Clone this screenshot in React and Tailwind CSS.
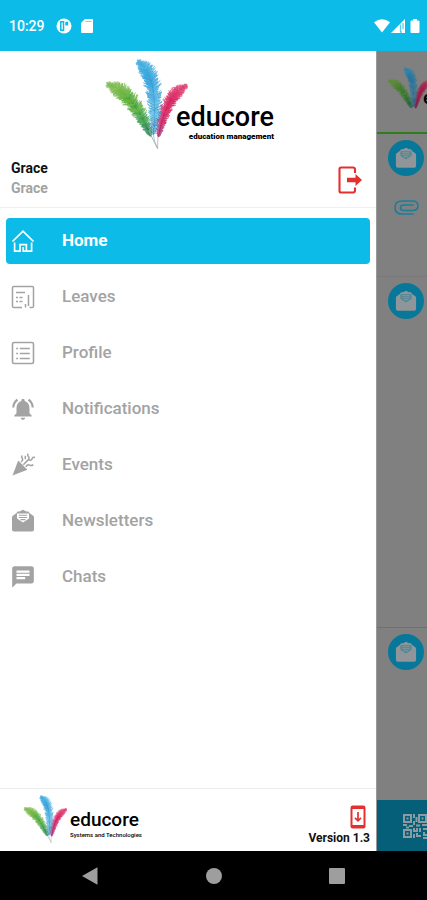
import { MdChat, MdNotificationsActive } from 'react-icons/md'
import clsx from 'clsx'

const FEATHERS = [
    {
        spine: [[46, 102], [124, 124], [178, 260]],
        width: 48,
        colors: ['#8fc062', '#74b742', '#58ac30', '#2f983a', '#136b52'],
    },
    {
        spine: [[286, 106], [222, 132], [200, 262]],
        width: 37,
        colors: ['#e0608a', '#dd3a6c', '#da2260', '#cb1758', '#8f2270'],
    },
    {
        spine: [[138, 34], [204, 66], [185, 256]],
        width: 48,
        colors: ['#5ab8e4', '#38a9df', '#2396d6', '#2aa3d8', '#136aa8'],
    },
]

// point and unit direction on a quadratic curve
function pointAt([a, b, c], t) {
    const u = 1 - t
    const x = u * u * a[0] + 2 * u * t * b[0] + t * t * c[0]
    const y = u * u * a[1] + 2 * u * t * b[1] + t * t * c[1]
    const dx = 2 * u * (b[0] - a[0]) + 2 * t * (c[0] - b[0])
    const dy = 2 * u * (b[1] - a[1]) + 2 * t * (c[1] - b[1])
    const len = Math.hypot(dx, dy)
    return { x, y, dx: dx / len, dy: dy / len }
}

// repeatable noise in 0..1
function noise(n) {
    const v = Math.sin(n * 127.1) * 43758.5453
    return v - Math.floor(v)
}

function barbs({ spine, width, colors }) {
    const out = []
    const count = 130
    for (let i = 0; i < count; i++) {
        const t = i / count
        const p = pointAt(spine, t)
        const profile = Math.min(1, 0.18 + t * 1.9) * Math.pow(1 - t, 0.32)
        for (const side of [-1, 1]) {
            const r = noise(i * 2 + side)
            const len = width * profile * (0.4 + 0.6 * r)
            const nx = -p.dy * side
            const ny = p.dx * side
            const mx = p.x + nx * len * 0.35 - p.dx * len * 0.35
            const my = p.y + ny * len * 0.35 - p.dy * len * 0.35
            const ex = p.x + nx * len * 0.75 - p.dx * len * 0.55
            const ey = p.y + ny * len * 0.75 - p.dy * len * 0.55
            const shade = Math.min(4, Math.floor(t * 3.4 + (1 - r) * 1.6))
            out.push({
                d: `M${p.x.toFixed(1)} ${p.y.toFixed(1)}Q${mx.toFixed(1)} ${my.toFixed(1)} ${ex.toFixed(1)} ${ey.toFixed(1)}`,
                color: colors[shade],
            })
        }
    }
    return out
}

function Feathers({ className }) {
    return (
        <svg viewBox="36 22 254 278" className={className} aria-hidden="true">
            {FEATHERS.map((f, i) => (
                <g key={i} fill="none" strokeLinecap="round">
                    {barbs(f).map((b, j) => (
                        <path key={j} d={b.d} stroke={b.color} strokeWidth={2.8} opacity={0.75} />
                    ))}
                </g>
            ))}
            <g fill="none" strokeWidth={2.5} strokeLinecap="round">
                <path d="M172 242Q184 270 197 294" stroke="#7fb59a" />
                <path d="M185 254Q188 275 198 296" stroke="#a9b3bb" />
                <path d="M199 262L198 296" stroke="#d9a0b4" />
            </g>
        </svg>
    )
}

function HomeIcon() {
    return (
        <svg viewBox="0 0 24 24" className="size-6" fill="none" stroke="currentColor" strokeWidth={1.7}>
            <path d="M1.5 12.5L12 2.2L22.5 12.5" />
            <path d="M3.6 13.5V22.2H9V15.6H15.4V22.2H20.6V13.5" />
            <path d="M12.2 18V22.2H15.4" />
        </svg>
    )
}

function LeavesIcon() {
    return (
        <svg viewBox="0 0 24 24" className="size-6" fill="none" stroke="currentColor" strokeWidth={1.5}>
            <path d="M11 22.5H2.8Q1.5 22.5 1.5 21.2V2.8Q1.5 1.5 2.8 1.5H21.2Q22.5 1.5 22.5 2.8V21.2Q22.5 22.5 21.2 22.5H18.5" />
            <path d="M5 7.5H14M5 12.5H7M8.5 12.5H11.5M5 16.5H7M8.5 16.5H11.5" />
            <path d="M14.5 19V22.5M17.5 10V21" />
        </svg>
    )
}

function ProfileIcon() {
    return (
        <svg viewBox="0 0 24 24" className="size-6" fill="none" stroke="currentColor" strokeWidth={1.6}>
            <rect x="1.5" y="1.5" width="21" height="21" rx="1.5" />
            <path d="M5.2 7.5H7M5.2 12.5H7M5.2 17.5H7M8.8 7.5H18.8M8.8 12.5H18.8M8.8 17.5H18.8" />
        </svg>
    )
}

function BellIcon() {
    return <MdNotificationsActive className="size-[26px]" />
}

function EventsIcon() {
    return (
        <svg viewBox="0 0 24 24" className="size-6" fill="none" stroke="currentColor" strokeWidth={1.5}>
            <path d="M1.5 22.5L7.2 7.6L16.4 16.8Z" fill="currentColor" stroke="none" />
            <path d="M10 8.8Q12.600 7.200 11.200 5.200Q10 3.800 11.200 2.400" />
            <path d="M12.3 11.7L17.600 6.400Q18.800 4.800 17.400 3.400Q16 2 17.300 .8" />
            <path d="M17.600 6.600Q20.500 8 21 5.800Q21.500 3.800 24 4.600" />
            <path d="M14.800 13.800Q16.800 11 18.800 12.200Q20.500 13.200 22.200 11.600" />
            <path d="M14.300 2.800V6.200" />
        </svg>
    )
}

function MailIcon({ className = 'size-6', paper = '#ffffff' }) {
    return (
        <svg viewBox="0 0 24 24" className={className} aria-hidden="true">
            <path
                d="M12 .8L8.500 2.500H6.500L5.500 4L1.500 7Q1 7.500 1 8.500V20.500Q1 22.500 3 22.500H21Q23 22.500 23 20.500V8.500Q23 7.500 22.500 7L18.500 4L17.500 2.500H15.500Z"
                fill="currentColor" />
            <path d="M6 4.500H18V9.500L12 13.500L6 9.500Z" fill={paper} />
            <path d="M7.800 6.200H16.200M7.800 8.500H16.200M9.500 10.600H14.500" stroke="currentColor" strokeWidth={1.1} />
        </svg>
    )
}

function ChatIcon() {
    return <MdChat className="size-[26px]" />
}

function ClipIcon() {
    return (
        <svg viewBox="0 0 25 15" className="mt-[24px] ml-[6px] h-[15px] w-[25px] shrink-0" fill="none" stroke="#1b7c9a" strokeWidth={1.6} aria-hidden="true">
            <path d="M19 14H8Q1 14 1 7.500T8 1H18.500Q24 1 24 5.700T18.500 10.500H9.500Q6.500 10.500 6.500 7.700T9.500 5H19" strokeLinecap="round" />
        </svg>
    )
}

function LogoutIcon() {
    return (
        <svg viewBox="0 0 24 28" className="h-7 w-6" fill="none" stroke="#e53030" strokeWidth={2.1}>
            <path d="M17 7V3.500Q17 1.500 15 1.500H3Q1.500 1.500 1.500 3V25Q1.500 26.500 3 26.500H15Q17 26.500 17 24.500V21.500" />
            <path d="M9 11.700H17.500V8L24 14L17.500 20V16.300H9Z" fill="#e53030" stroke="none" />
        </svg>
    )
}

function UpdateIcon() {
    return (
        <svg viewBox="0 0 16 24" className="h-6 w-4" aria-hidden="true">
            <rect x="0.500" y="0.500" width="15" height="23" rx="2.200" fill="#e53030" />
            <rect x="2.500" y="4" width="11" height="16" fill="#ffffff" />
            <path d="M8 7V15.500M5 12.800L8 15.800L11 12.800" fill="none" stroke="#e53030" strokeWidth={1.7} />
        </svg>
    )
}

function QrIcon() {
    return (
        <svg viewBox="0 0 26 26" className="size-[26px] shrink-0" fill="none" stroke="currentColor" strokeWidth={2}>
            <path d="M2 2H9V9H2ZM17 2H24V9H17ZM2 17H9V24H2Z" />
            <path d="M4.500 5.500H6.500M19.500 5.500H21.500M4.500 20.500H6.500" />
            <path d="M12 1V5M14.500 4V9M12 8V12M1 12H5M7 13H11M4 14.500H7M14 12.500H18M20 12H25M12 15V18H15V15M18 15V19M21 16H25M12 21V25M15 20V23H19M22 19V22H25M21 25H25" />
        </svg>
    )
}

const MENU = [
    { label: 'Home', Icon: HomeIcon, active: true },
    { label: 'Leaves', Icon: LeavesIcon },
    { label: 'Profile', Icon: ProfileIcon },
    { label: 'Notifications', Icon: BellIcon },
    { label: 'Events', Icon: EventsIcon },
    { label: 'Newsletters', Icon: MailIcon },
    { label: 'Chats', Icon: ChatIcon },
]

function StatusBar() {
    return (
        <header className="flex h-[51px] shrink-0 items-center justify-between bg-[#0dbbe8] pt-px pr-[7px] pl-[9px] text-white">
            <div className="flex items-center">
                <span className="pt-px text-[14px] font-medium">10:29</span>
                <svg viewBox="0 0 16 16" className="ml-[11px] size-4" aria-hidden="true">
                    <circle cx="8" cy="8" r="7.500" fill="#ffffff" />
                    <path d="M4.200 3.800H7.500V12.200H4.800V3.800" fill="none" stroke="#0dbbe8" strokeWidth={1.500} />
                    <path d="M9.300 3.800H12.200V7.500H9.300Z" fill="#0dbbe8" />
                </svg>
                <svg viewBox="0 0 12 14" className="ml-[9px] h-[14px] w-3" aria-hidden="true">
                    <path d="M4 0H11Q12 0 12 1V13Q12 14 11 14H1Q0 14 0 13V4Z" fill="#ffffff" />
                    <path d="M4.500 2.500H10.500" stroke="#0dbbe8" strokeWidth={1} opacity={0.6} />
                </svg>
            </div>
            <div className="flex items-center">
                <svg viewBox="0 0 16 14" className="h-[14px] w-4" aria-hidden="true">
                    <path d="M0 3.200Q8 -2.800 16 3.200L8 13.500Z" fill="#ffffff" />
                </svg>
                <svg viewBox="0 0 14 14" className="ml-px size-[14px]" aria-hidden="true">
                    <path d="M0 14L14 0V14Z" fill="#ffffff" />
                    <path d="M9.500 5.500V13H11M12 4V10" fill="none" stroke="#0dbbe8" strokeWidth={1.300} opacity={0.700} />
                </svg>
                <svg viewBox="0 0 10 14" className="ml-[5px] h-[14px] w-[10px]" aria-hidden="true">
                    <path d="M3 0H7V1.500H8.500Q9.500 1.500 9.500 2.500V13Q9.500 14 8.500 14H1.500Q.5 14 .5 13V2.500Q.5 1.500 1.500 1.500H3Z" fill="#ffffff" />
                </svg>
            </div>
        </header>
    )
}

function Drawer() {
    return (
        <aside className="flex min-w-0 flex-1 flex-col bg-white">
            <div className="border-b border-[#f0f0f0] pb-[9px]">
                <div className="flex justify-center pt-[7px] pl-[2px]">
                    <Feathers className="h-[92px] w-[84px] shrink-0" />
                    <div className="-ml-3 flex flex-col items-end pt-[43px] text-black">
                        <span className="text-[27px] leading-8 font-medium">educore</span>
                        <span className="text-[8px] leading-[8px] font-black">education management</span>
                    </div>
                </div>
                <div className="flex items-center justify-between pt-2 pr-[14px] pl-[11px]">
                    <div className="text-[14px] leading-5 font-bold">
                        <p className="text-[#111111]">Grace</p>
                        <p className="text-[#a3a3a3]">Grace</p>
                    </div>
                    <button type="button" aria-label="Log out" className="mt-1">
                        <LogoutIcon />
                    </button>
                </div>
            </div>

            <nav className="flex flex-1 flex-col gap-[10px] px-[6px] pt-[10px]">
                {MENU.map(({ label, Icon, active }) => (
                    <a key={label} href="#"
                        className={clsx(
                            'flex h-[46px] items-center rounded-[4px] pl-1 text-[17px]',
                            active ? 'bg-[#0dbbe8] font-bold text-white' : 'font-medium text-[#a3a3a3]',
                        )}>
                        <span className="flex w-[26px] justify-center"><Icon /></span>
                        <span className="pl-[26px]">{label}</span>
                    </a>
                ))}
            </nav>

            <footer className="flex h-[63px] items-start justify-between border-t border-[#ececec] pr-[6px] pl-[23px]">
                <div className="flex pt-[5px]">
                    <Feathers className="h-[50px] w-11 shrink-0" />
                    <div className="flex flex-col pt-[14px] pl-[3px] text-black">
                        <span className="text-[19px] leading-6 font-medium">educore</span>
                        <span className="text-[6px] leading-[6px] font-medium">Systems and Technologies</span>
                    </div>
                </div>
                <div className="flex flex-col items-end pt-4">
                    <button type="button" aria-label="Update" className="mr-1">
                        <UpdateIcon />
                    </button>
                    <span className="text-[12px] leading-[18px] font-bold text-[#111111]">Version 1.3</span>
                </div>
            </footer>
        </aside>
    )
}

function MailBadge() {
    return (
        <span className="flex size-9 shrink-0 items-center justify-center rounded-full bg-[#07779a] text-[#8f9598]">
            <MailIcon className="size-[22px]" paper="#4d8796" />
        </span>
    )
}

// the feed that stays visible, dimmed, beside the open drawer
function DimmedFeed() {
    return (
        <main className="flex w-[51px] shrink-0 flex-col overflow-hidden border-l border-[#999999] bg-[#808080] pt-px">
            <div className="flex h-[82px] shrink-0 border-b-2 border-[#2f7d1c] pt-[14px] pl-[10px]">
                <Feathers className="h-[50px] w-11 shrink-0 brightness-75" />
                <span className="-ml-2 pt-[18px] text-[19px] font-medium text-black">educore</span>
            </div>
            <div className="flex h-[143px] shrink-0 flex-col border-b border-[#787878] pt-[6px] pl-[11px]">
                <MailBadge />
                <ClipIcon />
            </div>
            <div className="h-[351px] shrink-0 border-b border-[#6f6f6f] pt-[6px] pl-[11px]">
                <MailBadge />
            </div>
            <div className="flex-1 pt-[6px] pl-[11px]">
                <MailBadge />
            </div>
            <div className="flex h-[51px] shrink-0 items-center bg-[#065f78] pl-[25px] text-[#8a9ba1]">
                <QrIcon />
            </div>
        </main>
    )
}

function NavBar() {
    return (
        <div className="flex h-[49px] shrink-0 items-center justify-between bg-black px-[82px]">
            <button type="button" aria-label="Back">
                <svg viewBox="0 0 16 18" className="h-[18px] w-4"><path d="M0 9L15.500 .3V17.700Z" fill="#9e9e9e" /></svg>
            </button>
            <button type="button" aria-label="Home screen" className="size-4 rounded-full bg-[#9e9e9e]" />
            <button type="button" aria-label="Recent apps" className="size-4 rounded-[1px] bg-[#9e9e9e]" />
        </div>
    )
}

export default function App() {
    return (
        <div className="flex min-h-screen flex-col font-[Roboto,sans-serif]">
            <StatusBar />
            <div className="flex flex-1">
                <Drawer />
                <DimmedFeed />
            </div>
            <NavBar />
        </div>
    )
}
